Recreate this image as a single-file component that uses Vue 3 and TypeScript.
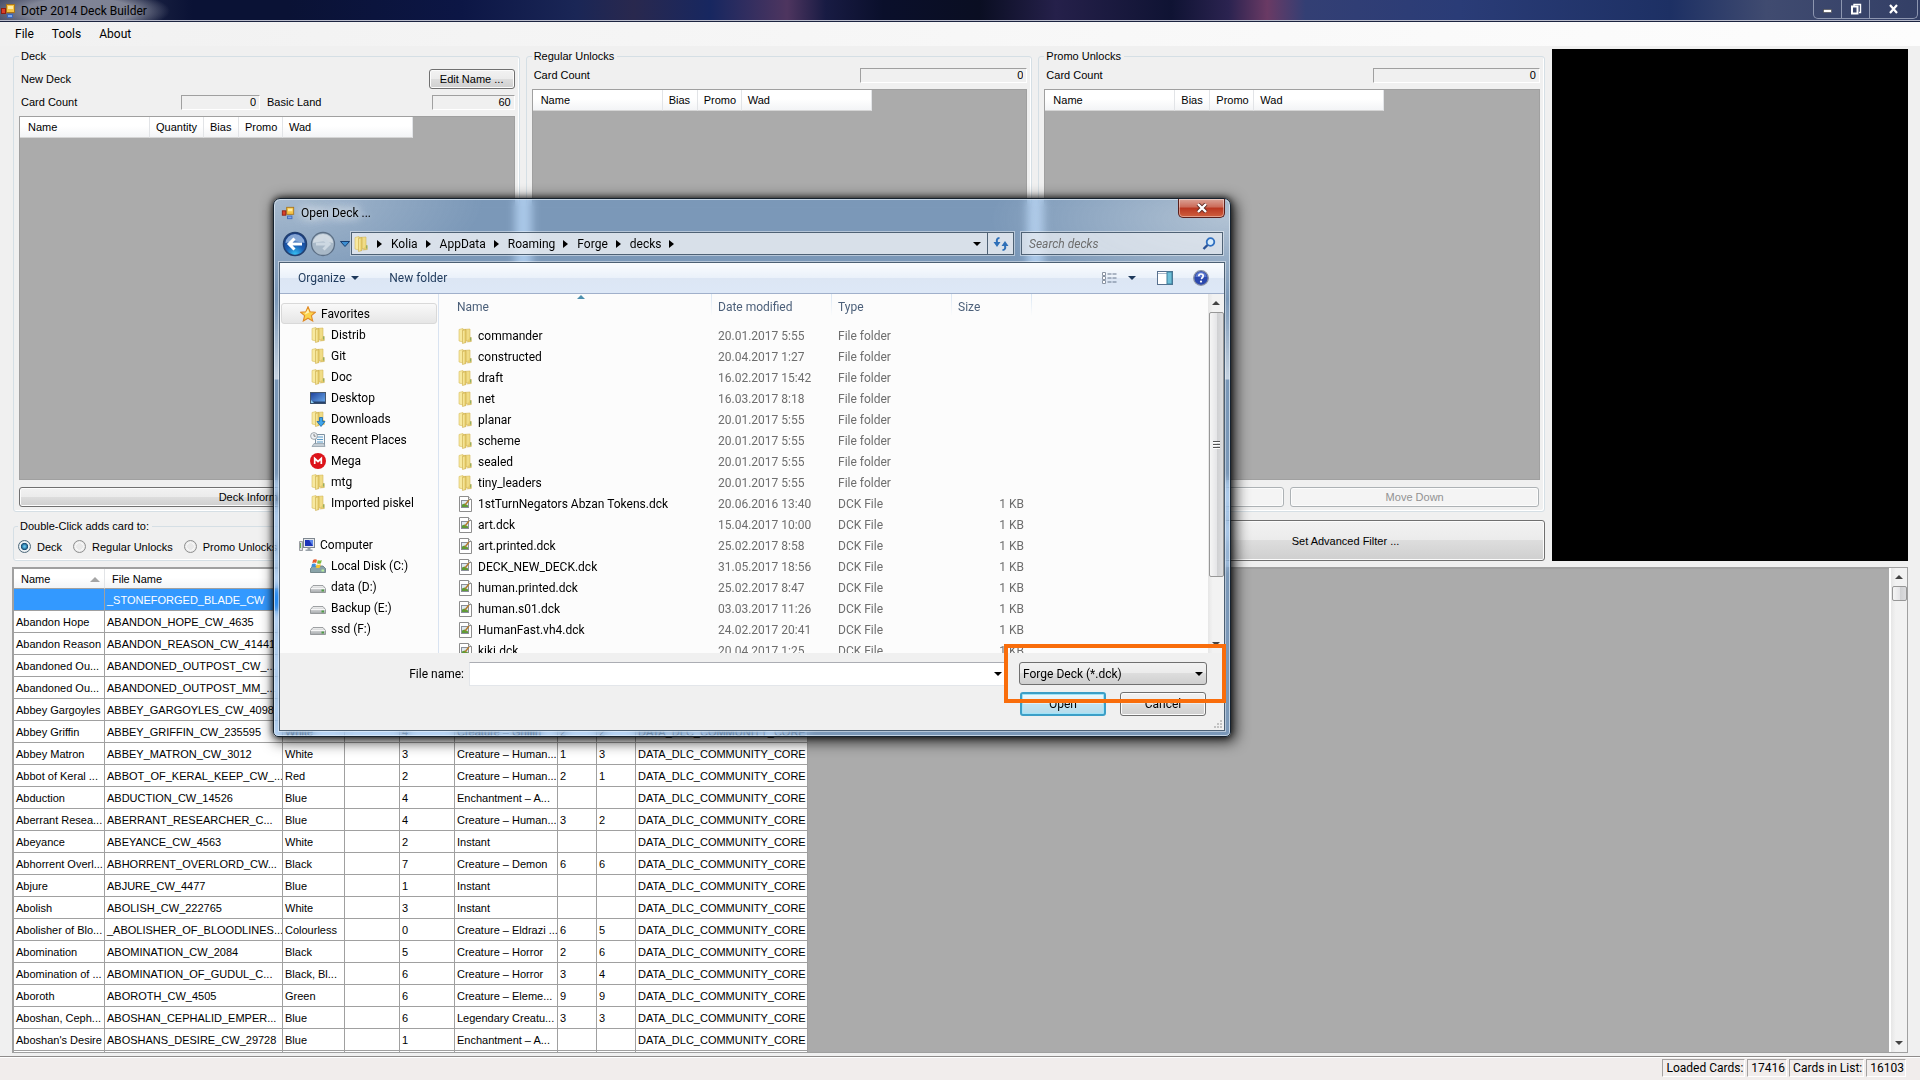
<script setup lang="ts">
import { ref } from 'vue'

interface Card {
  name: string
  file: string
  colour?: string
  cost?: string
  type?: string
  power?: string
  toughness?: string
}
interface Entry {
  name: string
  date: string
  folder: boolean
}
interface Place {
  name: string
  icon: string
}

const wad = 'DATA_DLC_COMMUNITY_CORE'

const cards: Card[] = [
  { name: '', file: '_STONEFORGED_BLADE_CW' },
  { name: 'Abandon Hope', file: 'ABANDON_HOPE_CW_4635' },
  { name: 'Abandon Reason', file: 'ABANDON_REASON_CW_41441' },
  { name: 'Abandoned Ou...', file: 'ABANDONED_OUTPOST_CW_...' },
  { name: 'Abandoned Ou...', file: 'ABANDONED_OUTPOST_MM_...' },
  { name: 'Abbey Gargoyles', file: 'ABBEY_GARGOYLES_CW_4098' },
  { name: 'Abbey Griffin', file: 'ABBEY_GRIFFIN_CW_235595', colour: 'White', cost: '4', type: 'Creature – Griffin', power: '2', toughness: '2' },
  { name: 'Abbey Matron', file: 'ABBEY_MATRON_CW_3012', colour: 'White', cost: '3', type: 'Creature – Human...', power: '1', toughness: '3' },
  { name: 'Abbot of Keral ...', file: 'ABBOT_OF_KERAL_KEEP_CW_...', colour: 'Red', cost: '2', type: 'Creature – Human...', power: '2', toughness: '1' },
  { name: 'Abduction', file: 'ABDUCTION_CW_14526', colour: 'Blue', cost: '4', type: 'Enchantment – A...' },
  { name: 'Aberrant Resea...', file: 'ABERRANT_RESEARCHER_C...', colour: 'Blue', cost: '4', type: 'Creature – Human...', power: '3', toughness: '2' },
  { name: 'Abeyance', file: 'ABEYANCE_CW_4563', colour: 'White', cost: '2', type: 'Instant' },
  { name: 'Abhorrent Overl...', file: 'ABHORRENT_OVERLORD_CW...', colour: 'Black', cost: '7', type: 'Creature – Demon', power: '6', toughness: '6' },
  { name: 'Abjure', file: 'ABJURE_CW_4477', colour: 'Blue', cost: '1', type: 'Instant' },
  { name: 'Abolish', file: 'ABOLISH_CW_222765', colour: 'White', cost: '3', type: 'Instant' },
  { name: 'Abolisher of Blo...', file: '_ABOLISHER_OF_BLOODLINES...', colour: 'Colourless', cost: '0', type: 'Creature – Eldrazi ...', power: '6', toughness: '5' },
  { name: 'Abomination', file: 'ABOMINATION_CW_2084', colour: 'Black', cost: '5', type: 'Creature – Horror', power: '2', toughness: '6' },
  { name: 'Abomination of ...', file: 'ABOMINATION_OF_GUDUL_C...', colour: 'Black, Bl...', cost: '6', type: 'Creature – Horror', power: '3', toughness: '4' },
  { name: 'Aboroth', file: 'ABOROTH_CW_4505', colour: 'Green', cost: '6', type: 'Creature – Eleme...', power: '9', toughness: '9' },
  { name: 'Aboshan, Ceph...', file: 'ABOSHAN_CEPHALID_EMPER...', colour: 'Blue', cost: '6', type: 'Legendary Creatu...', power: '3', toughness: '3' },
  { name: 'Aboshan\'s Desire', file: 'ABOSHANS_DESIRE_CW_29728', colour: 'Blue', cost: '1', type: 'Enchantment – A...' },
]

const entries: Entry[] = [
  { name: 'commander', date: '20.01.2017 5:55', folder: true },
  { name: 'constructed', date: '20.04.2017 1:27', folder: true },
  { name: 'draft', date: '16.02.2017 15:42', folder: true },
  { name: 'net', date: '16.03.2017 8:18', folder: true },
  { name: 'planar', date: '20.01.2017 5:55', folder: true },
  { name: 'scheme', date: '20.01.2017 5:55', folder: true },
  { name: 'sealed', date: '20.01.2017 5:55', folder: true },
  { name: 'tiny_leaders', date: '20.01.2017 5:55', folder: true },
  { name: '1stTurnNegators Abzan Tokens.dck', date: '20.06.2016 13:40', folder: false },
  { name: 'art.dck', date: '15.04.2017 10:00', folder: false },
  { name: 'art.printed.dck', date: '25.02.2017 8:58', folder: false },
  { name: 'DECK_NEW_DECK.dck', date: '31.05.2017 18:56', folder: false },
  { name: 'human.printed.dck', date: '25.02.2017 8:47', folder: false },
  { name: 'human.s01.dck', date: '03.03.2017 11:26', folder: false },
  { name: 'HumanFast.vh4.dck', date: '24.02.2017 20:41', folder: false },
  { name: 'kiki.dck', date: '20.04.2017 1:25', folder: false },
]

const favorites: Place[] = [
  { name: 'Distrib', icon: 'folder' },
  { name: 'Git', icon: 'folder' },
  { name: 'Doc', icon: 'folder' },
  { name: 'Desktop', icon: 'desktop' },
  { name: 'Downloads', icon: 'downloads' },
  { name: 'Recent Places', icon: 'recent' },
  { name: 'Mega', icon: 'mega' },
  { name: 'mtg', icon: 'folder' },
  { name: 'Imported piskel', icon: 'folder' },
]
const drives: Place[] = [
  { name: 'Local Disk (C:)', icon: 'sysdrive' },
  { name: 'data (D:)', icon: 'drive' },
  { name: 'Backup (E:)', icon: 'drive' },
  { name: 'ssd (F:)', icon: 'drive' },
]
const crumbs = ['Kolia', 'AppData', 'Roaming', 'Forge', 'decks']
const targets = ['Deck', 'Regular Unlocks', 'Promo Unlocks']

const target = ref('Deck')
const fileName = ref('')
const search = ref('')
const filter = ref('dck')
</script>

<template>
  <div class="window">
    <svg class="defs" width="0" height="0" aria-hidden="true">
      <defs>
        <linearGradient id="gold" x1="0" x2="1"><stop offset="0" stop-color="#fbf0ae" /><stop offset="1" stop-color="#e3c75f" /></linearGradient>
        <linearGradient id="screen" x1="0" x2="1" y2="1"><stop offset="0" stop-color="#1d3f9a" /><stop offset="1" stop-color="#6fb0ee" /></linearGradient>
        <linearGradient id="metal" x1="0" x2="0" y2="1"><stop offset="0" stop-color="#f4f4f4" /><stop offset="1" stop-color="#a4a8ab" /></linearGradient>
        <radialGradient id="orb" cx=".5" cy=".95" r=".9"><stop offset="0" stop-color="#35c3f5" /><stop offset=".45" stop-color="#1c5fb4" /><stop offset="1" stop-color="#173c86" /></radialGradient>
      </defs>
      <symbol id="form-icon" viewBox="0 0 16 16">
        <rect x="6.500" y="1.500" width="8" height="8" fill="#f6c445" stroke="#a8741a" /><rect x="8" y="3" width="5" height="3" fill="#fdeba4" />
        <rect x="1.500" y="5.500" width="4" height="5" fill="#d8402a" stroke="#8d1d12" />
        <rect x="7.500" y="11.500" width="5" height="3" fill="#7fa7ea" stroke="#3d66b8" />
      </symbol>
      <symbol id="folder" viewBox="0 0 16 16">
        <path d="M2 1.500 6 .5V14l-4-1z" fill="#f7e9a0" stroke="#d9bd5c" stroke-width=".6" />
        <path d="M6 1.500 13 1v11l-5 1z" fill="#f0dc86" stroke="#d3b555" stroke-width=".6" />
        <path d="M5.500 2.500 9 1.500v13l-3.500 1z" fill="url(#gold)" stroke="#c9aa47" stroke-width=".6" />
        <path d="M13 9.500h1.300v4l-4.300.5" fill="#e6cb68" stroke="#c9aa47" stroke-width=".5" /><path d="M13.600 9.500v3" stroke="#6fa66a" stroke-width=".8" />
      </symbol>
      <symbol id="desktop" viewBox="0 0 16 16">
        <rect x=".5" y="2.500" width="15" height="11" fill="url(#screen)" stroke="#48586c" /><path d="M1 11.500h14v2H1z" fill="#27436c" /><path d="M1 10l3 3H1z" fill="#8ed0f5" />
      </symbol>
      <symbol id="downloads" viewBox="0 0 16 16">
        <use href="#folder" /><path d="M9.500 6.500h3v4h2.500L11 15.500 7 10.500h2.500z" fill="#3fa5ea" stroke="#1b66ad" stroke-width=".8" />
      </symbol>
      <symbol id="recent" viewBox="0 0 16 16">
        <path d="M5.500 2.500h9v11h-9z" fill="#f3f7fa" stroke="#7d90a0" /><path d="M7 5h6M7 7.500h6M7 10h6" stroke="#5b9bc8" /><path d="M2 14.500h13l-1-3H4z" fill="#c5ced5" stroke="#8796a2" stroke-width=".7" />
        <circle cx="4" cy="4" r="3.400" fill="#eef1f4" stroke="#8a939b" stroke-width=".8" /><path d="M4 2v2.200h1.700" fill="none" stroke="#555" stroke-width=".7" />
      </symbol>
      <symbol id="mega" viewBox="0 0 16 16">
        <circle cx="8" cy="8" r="8" fill="#dc141b" /><path d="M4.700 11V5.500L8 8.500l3.300-3V11" fill="none" stroke="#fff" stroke-width="1.700" />
      </symbol>
      <symbol id="drive" viewBox="0 0 16 16">
        <path d="M3 6.500h10l2.500 3v4H.5v-4z" fill="url(#metal)" stroke="#868a8d" stroke-width=".8" /><path d="M.8 9.500h14.400" stroke="#fff" stroke-width=".8" /><rect x="11.500" y="10.500" width="2.500" height="2" fill="#4e9c46" />
      </symbol>
      <symbol id="sysdrive" viewBox="0 0 16 16">
        <path d="M3 8h10l2.500 2.500v4H.5v-4z" fill="#89a3a8" stroke="#5e7378" stroke-width=".8" /><rect x="11.500" y="11.500" width="2.500" height="2" fill="#b9ef9a" />
        <path d="M3 2q2-1.500 4-.3L6.200 5q-2-1-3.900.2z" fill="#ea5a2b" /><path d="M7.800 2q2 1 4 0L11 5.300q-2 1-4 0z" fill="#7dbb3c" /><path d="M2 6q2-1 3.900-.1L5 9.300Q3.200 8.300 1.300 9.200z" fill="#3f8fdc" /><path d="M6.800 6.200q2 1 4 .1L10 9.600q-2 1-4.100-.2z" fill="#f7c52c" />
      </symbol>
      <symbol id="computer" viewBox="0 0 16 16">
        <path d="M.5 4.500h3v9h-3z" fill="#d7dade" stroke="#85898e" stroke-width=".8" /><path d="M1.500 6v5" stroke="#69b052" />
        <rect x="4.500" y="1.500" width="11" height="9" fill="#e4e8ec" stroke="#7f8790" /><rect x="6" y="3" width="8" height="6" fill="#1c34b8" /><path d="M10 3h4v6z" fill="#5c86ea" /><path d="M8.500 10.500h3v2h2v1.500h-7v-1.500h2z" fill="#9aa2aa" />
      </symbol>
      <symbol id="star" viewBox="0 0 16 16">
        <path d="M8 .8l2.100 5 5.300.4-4 3.500 1.300 5.300L8 12.200 3.300 15l1.300-5.300-4-3.500 5.300-.4z" fill="#fbd34c" stroke="#e08a26" stroke-width="1.100" /><path d="M8 3l1.200 3.500-4.500 2z" fill="#fff3b5" />
      </symbol>
      <symbol id="deckfile" viewBox="0 0 16 16">
        <path d="M2.500.5h9l3 3v12h-12z" fill="#fff" stroke="#8d8d8d" /><path d="M11.500.5v3h3" fill="#eee" stroke="#8d8d8d" /><rect x="4.500" y="4.500" width="7" height="7" fill="#dfe8f0" stroke="#8a8f98" /><path d="M5 11V8.500l2.500-1 3.500 2V11z" fill="#5f9c37" /><path d="M8 9l4-5" stroke="#b37b2c" stroke-width="1.400" />
      </symbol>
      <symbol id="down" viewBox="0 0 8 4"><path d="M0 0h8L4 4z" fill="currentColor" /></symbol>
    </svg>

    <header class="titlebar">
      <svg class="i16"><use href="#form-icon" /></svg>
      <h1>DotP 2014 Deck Builder</h1>
      <div class="sysbuttons">
        <button type="button" aria-label="Minimize"><svg width="12" height="10"><rect x="1.500" y="5.500" width="8" height="3" fill="#fff" stroke="#444" stroke-width=".6" /></svg></button>
        <button type="button" aria-label="Restore"><svg width="12" height="12"><path d="M4 3V1.500h6.500v8H9" fill="none" stroke="#fff" stroke-width="1.400" /><rect x="2" y="3.500" width="5.500" height="7" fill="none" stroke="#fff" stroke-width="2" /></svg></button>
        <button type="button" class="wide" aria-label="Close"><svg width="12" height="12"><path d="M2 2l7 8M9 2l-7 8" stroke="#fff" stroke-width="2.200" /></svg></button>
      </div>
    </header>

    <nav class="menubar">
      <button type="button">File</button><button type="button">Tools</button><button type="button">About</button>
    </nav>

    <main class="body">
      <section class="upper">
        <div class="upper-left">
          <div class="groups">
            <fieldset>
              <legend>Deck</legend>
              <div class="line tall"><span>New Deck</span><button type="button" class="btn edit">Edit Name ...</button></div>
              <div class="line counts">
                <label for="deck-count">Card Count</label><input id="deck-count" class="sunken narrow" value="0" readonly />
                <label class="land" for="deck-land">Basic Land</label><input id="deck-land" class="sunken short" value="60" readonly />
              </div>
              <div class="list">
                <table class="heads">
                  <colgroup><col class="w130" /><col class="w54" /><col class="w35" /><col class="w44" /><col class="w130" /></colgroup>
                  <thead><tr><th>Name</th><th>Quantity</th><th>Bias</th><th>Promo</th><th>Wad</th></tr></thead>
                </table>
              </div>
              <div class="actions"><button type="button" class="btn">Deck Information ...</button></div>
            </fieldset>
            <fieldset v-for="title in ['Regular Unlocks', 'Promo Unlocks']" :key="title">
              <legend>{{ title }}</legend>
              <div class="line first"><label :for="title">Card Count</label><input :id="title" class="sunken long" value="0" readonly /></div>
              <div class="list">
                <table class="heads">
                  <colgroup><col class="w130" /><col class="w35" /><col class="w44" /><col class="w130" /></colgroup>
                  <thead><tr><th>Name</th><th>Bias</th><th>Promo</th><th>Wad</th></tr></thead>
                </table>
              </div>
              <div class="actions"><button type="button" class="btn up" disabled>Move Up</button><button type="button" class="btn" disabled>Move Down</button></div>
            </fieldset>
          </div>
          <div class="choice">
            <fieldset class="targets">
              <legend>Double-Click adds card to:</legend>
              <label v-for="t in targets" :key="t"><input v-model="target" type="radio" name="target" :value="t" />{{ t }}</label>
            </fieldset>
            <button type="button" class="btn advanced">Set Advanced Filter ...</button>
          </div>
        </div>
        <div class="preview"></div>
      </section>

      <section class="cards">
        <div class="cards-view">
          <table class="card-table">
            <colgroup><col class="c1" /><col class="c2" /><col class="c3" /><col class="c4" /><col class="c4" /><col class="c6" /><col class="c7" /><col class="c7" /><col class="c9" /></colgroup>
            <thead>
              <tr><th>Name<svg class="sort" width="10" height="5"><path d="M0 5h10L5 0z" fill="#a5a5a5" /></svg></th><th>File Name</th><th></th><th></th><th></th><th></th><th></th><th></th><th></th></tr>
            </thead>
            <tbody>
              <tr v-for="(c, i) in cards" :key="i" :class="{ picked: i === 0 }">
                <td>{{ c.name }}</td><td>{{ c.file }}</td><td>{{ c.colour }}</td><td></td><td>{{ c.cost }}</td><td>{{ c.type }}</td><td>{{ c.power }}</td><td>{{ c.toughness }}</td><td>{{ wad }}</td>
              </tr>
              <tr><td></td><td></td><td></td><td></td><td></td><td></td><td></td><td></td><td></td></tr>
            </tbody>
          </table>
        </div>
        <div class="vscroll main-scroll">
          <svg class="arrow up" width="8" height="4"><use href="#down" /></svg>
          <div class="thumb small"></div>
          <svg class="arrow last" width="8" height="4"><use href="#down" /></svg>
        </div>
      </section>
    </main>

    <footer class="status">
      <span>Loaded Cards:</span><span>17416</span><span>Cards in List:</span><span>16103</span>
    </footer>

    <div class="dialog" role="dialog" aria-labelledby="dialog-title">
      <div class="caption">
        <svg class="i14"><use href="#form-icon" /></svg>
        <h2 id="dialog-title">Open Deck ...</h2>
        <button type="button" class="close" aria-label="Close"><svg width="12" height="10"><path d="M2 1l8 8M10 1l-8 8" stroke="#5b2a24" stroke-width="4" /><path d="M2 1l8 8M10 1l-8 8" stroke="#fff" stroke-width="2.400" /></svg></button>
      </div>
      <div class="navrow">
        <button type="button" class="round" aria-label="Back">
          <svg width="26" height="26"><circle cx="13" cy="13" r="11.500" fill="url(#orb)" stroke="#23406f" stroke-width="1.500" /><path d="M3.500 12a9.500 9 0 0119 0q-9.500-3-19 0z" fill="#a9c6ea" opacity=".75" /><path d="M20 13H8M12.500 7.500L7 13l5.500 5.500" fill="none" stroke="#fff" stroke-width="3" /></svg>
        </button>
        <button type="button" class="round" aria-label="Forward">
          <svg width="26" height="26"><circle cx="13" cy="13" r="11.500" fill="#a9b9c8" stroke="#5c6f85" stroke-width="1.300" /><path d="M3 12a10 9 0 0120 0q-10-3-20 0z" fill="#dbe2e9" opacity=".8" /><path d="M6 13h12M13.500 7.500L19 13l-5.500 5.500" fill="none" stroke="#cdd8e2" stroke-width="3" /></svg>
        </button>
        <button type="button" class="recent" aria-label="Recent locations"><svg width="10" height="6"><path d="M.5.500h9L5 5.500z" fill="#3c8fd3" stroke="#173e70" /></svg></button>
        <div class="address">
          <svg class="i16"><use href="#folder" /></svg>
          <svg class="crumb-arrow" width="5" height="8"><path d="M0 0l5 4-5 4z" /></svg>
          <template v-for="c in crumbs" :key="c">
            <a href="#">{{ c }}</a><svg class="crumb-arrow" width="5" height="8"><path d="M0 0l5 4-5 4z" /></svg>
          </template>
          <svg class="address-drop" width="8" height="4"><use href="#down" /></svg>
          <button type="button" class="refresh" aria-label="Refresh"><svg width="16" height="14"><path d="M6.500 1Q3 1 4 5.500M9.500 13q3.500 0 2.500-4.500" fill="none" stroke="#2d6fb8" stroke-width="2" /><path d="M.5 5h7L4 10zM8.500 9h7L12 4z" fill="#2d6fb8" /></svg></button>
        </div>
        <div class="search">
          <input v-model="search" type="text" placeholder="Search decks" aria-label="Search decks" />
          <svg width="14" height="14"><circle cx="8.500" cy="5" r="3.800" fill="#d6ebfb" stroke="#2f6fc0" stroke-width="1.800" /><path d="M5.500 8L1.500 12" stroke="#2a5296" stroke-width="2.400" /></svg>
        </div>
      </div>

      <div class="client">
        <div class="toolbar">
          <button type="button">Organize<svg width="8" height="4"><use href="#down" /></svg></button>
          <button type="button">New folder</button>
          <div class="tools">
            <button type="button" aria-label="Change your view"><svg width="16" height="14"><path d="M1.500 1.500h3v3h-3zM1.500 5.500h3v3h-3zM1.500 9.500h3v3h-3z" fill="#fff" stroke="#8a94a3" /><path d="M6.500 3h4M11.500 3h4M6.500 7h4M11.500 7h4M6.500 11h4M11.500 11h4" stroke="#67768c" /></svg></button>
            <button type="button" class="more" aria-label="More options"><svg width="8" height="4"><use href="#down" /></svg></button>
            <button type="button" class="pane" aria-label="Preview pane"><svg width="16" height="14"><rect x=".5" y=".5" width="15" height="13" fill="#fff" stroke="#57708e" /><path d="M1 2.500h9" stroke="#a9b9cc" /><rect x="10" y="1" width="5" height="12" fill="#6fbfd8" stroke="#3c7f9b" /></svg></button>
            <button type="button" aria-label="Help"><svg width="16" height="16"><circle cx="8" cy="8" r="7.300" fill="#2b48ae" stroke="#8a92a5" stroke-width="1.300" /><path d="M2.500 7a5.500 5 0 0111 0z" fill="#7f9be6" opacity=".6" /><path d="M5.800 6.200q0-2.200 2.200-2.200t2.200 1.900Q10.200 7.400 8 8.800" fill="none" stroke="#fff" stroke-width="1.700" /><circle cx="8" cy="11.600" r="1.100" fill="#fff" /></svg></button>
          </div>
        </div>
        <div class="panes">
          <aside class="places">
            <div class="place root current"><svg class="i16"><use href="#star" /></svg>Favorites</div>
            <div v-for="p in favorites" :key="p.name" class="place"><svg class="i16"><use :href="'#' + p.icon" /></svg>{{ p.name }}</div>
            <div class="place root spaced"><svg class="i16"><use href="#computer" /></svg>Computer</div>
            <div v-for="p in drives" :key="p.name" class="place"><svg class="i16"><use :href="'#' + p.icon" /></svg>{{ p.name }}</div>
          </aside>
          <div class="files">
            <table>
              <colgroup><col class="f1" /><col class="f2" /><col class="f2" /><col class="f4" /></colgroup>
              <thead><tr><th class="fname">Name<svg class="asc" width="8" height="4"><path d="M0 4h8L4 0z" fill="#4d8fae" /></svg></th><th>Date modified</th><th>Type</th><th>Size</th></tr></thead>
              <tbody>
                <tr v-for="e in entries" :key="e.name">
                  <td class="fname"><svg class="i16"><use :href="e.folder ? '#folder' : '#deckfile'" /></svg>{{ e.name }}</td>
                  <td>{{ e.date }}</td><td>{{ e.folder ? 'File folder' : 'DCK File' }}</td><td class="size">{{ e.folder ? '' : '1 KB' }}</td>
                </tr>
              </tbody>
            </table>
          </div>
          <div class="vscroll file-scroll">
            <svg class="arrow up" width="8" height="4"><use href="#down" /></svg>
            <div class="thumb big"><i></i></div>
            <svg class="arrow last" width="8" height="4"><use href="#down" /></svg>
          </div>
        </div>
        <div class="bottom">
          <div class="namerow">
            <label for="file-name">File name:</label>
            <div class="combo">
              <input id="file-name" v-model="fileName" type="text" />
              <button type="button" aria-label="Previous names"><svg width="8" height="4"><use href="#down" /></svg></button>
            </div>
            <div class="filter">
              <select v-model="filter" aria-label="File type"><option value="dck">Forge Deck (*.dck)</option></select>
              <svg width="8" height="4"><use href="#down" /></svg>
            </div>
          </div>
          <div class="confirm">
            <button type="button" class="btn default">Open</button>
            <button type="button" class="btn">Cancel</button>
          </div>
          <svg class="grip" width="10" height="10"><path d="M7 1h2v2H7zM4 4h2v2H4zM7 4h2v2H7zM1 7h2v2H1zM4 7h2v2H4zM7 7h2v2H7z" fill="#c2c2c2" /></svg>
        </div>
      </div>
      <div class="marker"></div>
    </div>
  </div>
</template>

<style>
body { margin: 0; }
</style>

<style scoped>
.window {
  --sans: "Liberation Sans", Arial, sans-serif;
  --segoe: Roboto, "Noto Sans", sans-serif;
  position: relative;
  display: flex;
  flex-direction: column;
  height: 100vh;
  min-height: 800px;
  overflow: hidden;
  background: #f0f0f0;
  color: #000;
  font: 11px/14px var(--sans);
}
.window *, .window *::before { box-sizing: border-box; }
.defs { position: absolute; }
button, input, select { font: inherit; color: inherit; margin: 0; padding: 0; }
button { border: 0; background: none; white-space: nowrap; }
h1, h2 { margin: 0; font-weight: 400; }
svg { flex: none; display: block; }
.i16 { width: 16px; height: 16px; }
.i14 { width: 14px; height: 14px; }

.titlebar {
  display: flex;
  align-items: center;
  height: 22px;
  flex: none;
  gap: 5px;
  padding: 0 2px 0 0;
  border-bottom: 1px solid #1c2440;
  box-shadow: inset 0 -1px #b9bccb;
  background:
    radial-gradient(ellipse 90px 22px at 80px 11px, #85899aee 0 60%, transparent),
    linear-gradient(90deg, #4a5069 0, #0a1235 10%, #0a1235 15%, #0c1645 24%, #1a2656 30%, #29284e 33%, #172760 37%, #4e355f 41%, #181b43 43%, #0a0f2b 46%, #0a0e22 51%, #25204a 55%, #0f1333 61%, #2b2350 64%, #6a3a64 66%, #333f74 68%, #2a3c77 76%, #1d3064 87%, #404b70 92%, #333f66);
}
.titlebar h1 { font: 12px/16px var(--segoe); color: #000; }
.sysbuttons { display: flex; align-self: flex-start; height: 19px; margin-left: auto; border: 1px solid #8d96b0; border-top: 0; border-radius: 0 0 5px 5px; }
.sysbuttons button { width: 28px; display: grid; place-items: center; border-right: 1px solid #8d96b0; }
.sysbuttons button.wide { width: 47px; border: 0; }

.menubar { display: flex; flex: none; height: 24px; padding-left: 8px; background: linear-gradient(90deg, #f1f1f1, #fdfdfd); font: 12px/24px var(--segoe); }
.menubar button { padding: 0 7px; margin-right: 4px; }

.body { display: flex; flex-direction: column; flex: 1; min-height: 0; padding: 3px 12px 3px; gap: 6px; }
.upper { display: flex; flex: none; gap: 7px; height: 512px; padding-left: 1px; }
.upper-left { flex: 1; display: flex; flex-direction: column; gap: 7px; min-width: 0; }
.preview { width: 356px; background: #000; }
.groups { flex: 1; display: grid; grid-template-columns: repeat(3, 1fr); gap: 6px; min-height: 0; }
fieldset { min-width: 0; margin: 0; padding: 0 4px 4px 5px; border: 1px solid #d5dfe5; border-radius: 3px; box-shadow: inset -1px -1px #fff; display: flex; flex-direction: column; }
legend { padding: 0 3px 0 2px; height: 14px; }
.line { display: flex; align-items: center; height: 14px; padding-left: 2px; margin-bottom: 7px; }
.line.first { margin-top: 5px; }
.line.tall { height: 20px; margin: 6px 0; }
.line .edit { width: 86px; margin-left: auto; }
.sunken { height: 15px; border: 1px solid; border-color: #a0a0a0 #fff #fff #a0a0a0; background: #f0f0f0; text-align: right; padding-right: 3px; min-width: 0; }
.line label { flex: none; }
.sunken.narrow { width: 79px; }
.sunken.short { width: 83px; margin-left: auto; }
.sunken.long { width: 167px; margin-left: auto; }
.counts label:first-child { width: 160px; }
.counts .land { margin-left: 7px; }
.list { flex: 1; background: #ababab; border: 1px solid #a0a0a0; min-height: 0; }
.actions { display: flex; gap: 6px; margin-top: 7px; padding: 0 1px 0 0; }
.btn { flex: 1; height: 20px; border: 1px solid #707070; border-radius: 3px; background: linear-gradient(#f2f2f2, #ebebeb 50%, #dddddd 50%, #cfcfcf); box-shadow: inset 0 0 0 1px #fcfcfc; }
.btn.edit { flex: none; }
.btn.up { flex: none; width: 240px; }
.btn:disabled { color: #929292; border-color: #adb2b5; background: #f4f4f4; }

table { border-collapse: separate; border-spacing: 0; table-layout: fixed; }
th { font-weight: 400; text-align: left; }
th, td { padding: 0; white-space: nowrap; overflow: hidden; }
.heads { width: 0; }
.heads th { height: 21px; padding-left: 6px; border-right: 1px solid #e2e4e7; border-bottom: 1px solid #d5d5d5; background: linear-gradient(#fff 45%, #f3f4f6); }
.heads th:first-child { padding-left: 8px; }
.w130 { width: 130px; } .w54 { width: 54px; } .w35 { width: 35px; } .w44 { width: 44px; }

.choice { display: flex; gap: 6px; height: 42px; align-items: flex-end; }
.targets { flex: 1; height: 42px; flex-direction: row; gap: 0; padding: 0 4px; align-items: center; }
.targets label { display: flex; align-items: center; margin-right: 11px; gap: 6px; }
.targets input { appearance: none; width: 13px; height: 13px; border: 1px solid #8e8f8f; border-radius: 50%; background: radial-gradient(#e9e9e9 40%, #f9f9f9 45%, #cfcfcf); }
.targets input:checked { background: radial-gradient(#5fc4ee 8%, #164c75 42%, #f0f4f6 52%, #cdd6da); border-color: #4f6a7c; }
.advanced { flex: none; width: 399px; height: 41px; }

.cards { flex: 1; display: flex; min-height: 0; border: 1px solid #a0a0a0; background: #ababab; }
.cards-view { flex: 1; overflow: hidden; border: solid #a0a0a0; border-width: 1px 0 0 1px; }
.card-table { width: 0; background: #fff; }
.c1 { width: 91px; } .c2 { width: 178px; } .c3 { width: 62px; } .c4 { width: 55px; } .c6 { width: 103px; } .c7 { width: 39px; } .c9 { width: 172px; }
.card-table th { position: relative; height: 20px; padding-left: 7px; border-right: 1px solid #e2e4e7; border-bottom: 1px solid #a0a0a0; background: linear-gradient(#fff 45%, #f3f4f6); }
.sort { position: absolute; right: 4px; top: 8px; }
.card-table td { height: 22px; padding-left: 2px; border: solid #a0a0a0; border-width: 0 1px 1px 0; }
.picked td { background: #3399ff; color: #fff; }

.vscroll { display: flex; flex-direction: column; align-items: center; background: linear-gradient(90deg, #e6e6e6, #f2f2f2 30%); flex: none; }
.arrow { color: #444; }
.arrow.up { transform: rotate(180deg); margin: 7px 0; }
.arrow.last { margin: auto 0 7px; }
.main-scroll { width: 18px; border-left: 2px solid #fff; }
.thumb { width: 15px; border: 1px solid #979797; border-radius: 2px; background: linear-gradient(90deg, #f5f5f5, #e6e6e8 50%, #cfd0d2 52%, #dcdcde); }
.thumb.small { height: 15px; }

.status { flex: none; display: flex; justify-content: flex-end; align-items: flex-start; gap: 2px; height: 24px; padding: 2px 14px 0; border-top: 1px solid #8f8c8b; background: #f1edec; box-shadow: inset 0 1px #fff; font: 12px/17px var(--segoe); }
.status span { height: 18px; padding: 0 1px 0 3px; border: 1px solid; border-color: #a5a2a1 #fff #fff #a5a2a1; }

.dialog {
  position: absolute;
  left: 273px;
  top: 198px;
  width: 958px;
  padding: 0 5px 5px;
  border: 1px solid #16222e;
  border-radius: 7px 7px 5px 5px;
  background:
    radial-gradient(ellipse 210px 90px at 0 0, #d5dee680, transparent),
    radial-gradient(ellipse 240px 80px at 100% 20px, #d5dee699, transparent),
    linear-gradient(#fff0 100px, #ffffff90 180px, #fff0 181px),
    #0c6ed74d;
  backdrop-filter: blur(4px);
  box-shadow: inset 0 0 0 1px #e4eef7b0, 0 0 6px #000c, 3px 3px 14px 2px #000b;
  font: 12px/16px var(--segoe);
}
.caption { display: flex; align-items: center; gap: 6px; height: 28px; padding-left: 2px; }
.caption h2 { font: 12px/18px var(--segoe); padding: 0 10px 0 0; text-shadow: 0 0 8px #fff, 0 0 12px #fff; }
.close { align-self: flex-start; margin-left: auto; width: 47px; height: 19px; display: grid; place-items: center; border: 1px solid #5a1f1c; border-top: 0; border-radius: 0 0 5px 5px; background: linear-gradient(#dba396, #cb6a58 45%, #b93620 50%, #cf5f3e); box-shadow: inset 0 0 0 1px #ffffff66; }
.navrow { display: flex; align-items: center; height: 35px; padding: 0 2px 2px 3px; }
.round { width: 26px; height: 26px; margin-right: 2px; }
.recent { width: 13px; height: 16px; display: grid; place-items: center; }
.address, .search { display: flex; align-items: center; height: 23px; border: 1px solid #4f6275; box-shadow: 0 0 0 1px #ffffff70; }
.address { flex: 1; background: #e9ecf2d9; padding-left: 1px; }
.address a { color: #000; text-decoration: none; margin: 0 8px 0 9px; }
.address-drop { margin: 0 6px 0 auto; }
.address .i16 + .crumb-arrow { margin-left: 8px; }
.refresh { align-self: stretch; width: 26px; display: grid; place-items: center; border-left: 1px solid #4f6275; }
.search { width: 202px; margin-left: 7px; background: #e9edf2c0; padding: 0 6px 0 7px; }
.search input { flex: 1; min-width: 0; border: 0; background: none; outline: 0; font-style: italic; }
.search input::placeholder { color: #6d6d6d; opacity: 1; }

.client { border: 1px solid #4c6074; background: #f0f0f0; box-shadow: 0 0 0 1px #ffffff70; }
.toolbar { display: flex; align-items: center; height: 31px; padding: 0 15px 0 18px; border-bottom: 1px solid #a0b0cb; background: linear-gradient(#fafcfe, #eaf1fa 50%, #dce6f4 51%, #dde8f7); color: #1e395b; }
.toolbar button { display: flex; align-items: center; gap: 6px; margin-right: 30px; }
.toolbar .tools { display: flex; align-items: center; margin-left: auto; }
.toolbar .tools button { margin: 0; }
.toolbar .tools .more { margin: 0 21px 0 11px; }
.toolbar .tools .pane { margin-right: 20px; }
.panes { display: flex; height: 359px; background: #fcfcfc; }
.places { width: 159px; flex: none; padding: 9px 1px 0; border-right: 1px solid #d9e3f1; }
.place { display: flex; align-items: center; gap: 5px; height: 21px; padding-left: 29px; white-space: nowrap; }
.place.root { padding-left: 18px; }
.place.current { border: 1px solid #d9d9d9; border-radius: 3px; background: linear-gradient(#f9f9f9, #e6e6e6); }
.place.spaced { margin-top: 21px; }
.files { flex: 1; overflow: hidden; }
.files table { width: 0; }
.f1 { width: 273px; } .f2 { width: 120px; } .f4 { width: 80px; }
.files th { position: relative; height: 31px; padding-left: 6px; line-height: 26px; vertical-align: top; color: #4c607a; background: linear-gradient(#d9e6f4, #fcfcfc) right top / 1px 22px no-repeat; }
.files td { height: 21px; padding-left: 6px; color: #6d6d6d; }
.files .fname { padding-left: 18px; }
.files td.fname { color: #000; }
.files td svg { display: inline-block; vertical-align: -4px; margin-right: 5px; }
.files .size { text-align: right; padding-right: 8px; }
.asc { position: absolute; left: 138px; top: 1px; }
.file-scroll { width: 16px; }
.thumb.big { height: 265px; display: grid; place-items: center; }
.thumb i { width: 7px; height: 8px; background: repeating-linear-gradient(#555 0 1px, #fff 1px 2px, transparent 2px 3px); }
.bottom { position: relative; height: 77px; padding-top: 9px; }
.namerow { display: flex; height: 24px; padding-right: 17px; align-items: stretch; }
.namerow > label { width: 184px; text-align: right; line-height: 24px; margin-right: 5px; }
.combo { flex: 1; display: flex; border: 1px solid #e3e6ea; border-top-color: #abadb3; background: #fff; margin-right: 13px; }
.combo input { flex: 1; min-width: 0; border: 0; outline: 0; background: none; }
.combo button { width: 16px; display: grid; place-items: center start; padding-left: 5px; }
.filter { position: relative; width: 188px; height: 23px; }
.filter select { appearance: none; width: 100%; height: 100%; padding: 0 3px; border: 1px solid #707070; border-radius: 3px; background: linear-gradient(#f2f2f2, #ebebeb 50%, #dddddd 50%, #cfcfcf); }
.filter svg { position: absolute; right: 4px; top: 10px; pointer-events: none; }
.confirm { display: flex; justify-content: flex-end; gap: 14px; padding: 6px 18px 0 0; }
.confirm .btn { flex: none; width: 86px; height: 24px; }
.confirm .default { border: 2px solid #3c9fc7; background: linear-gradient(#eef8fc, #dcf0f8 50%, #c3e4f1 50%, #b5dcec); box-shadow: inset 0 0 0 1px #9fe3f8; }
.grip { position: absolute; right: 1px; bottom: 1px; }
.marker { position: absolute; right: 4px; top: 445px; width: 222px; height: 59px; border: 4px solid #f96d0b; pointer-events: none; }
</style>
